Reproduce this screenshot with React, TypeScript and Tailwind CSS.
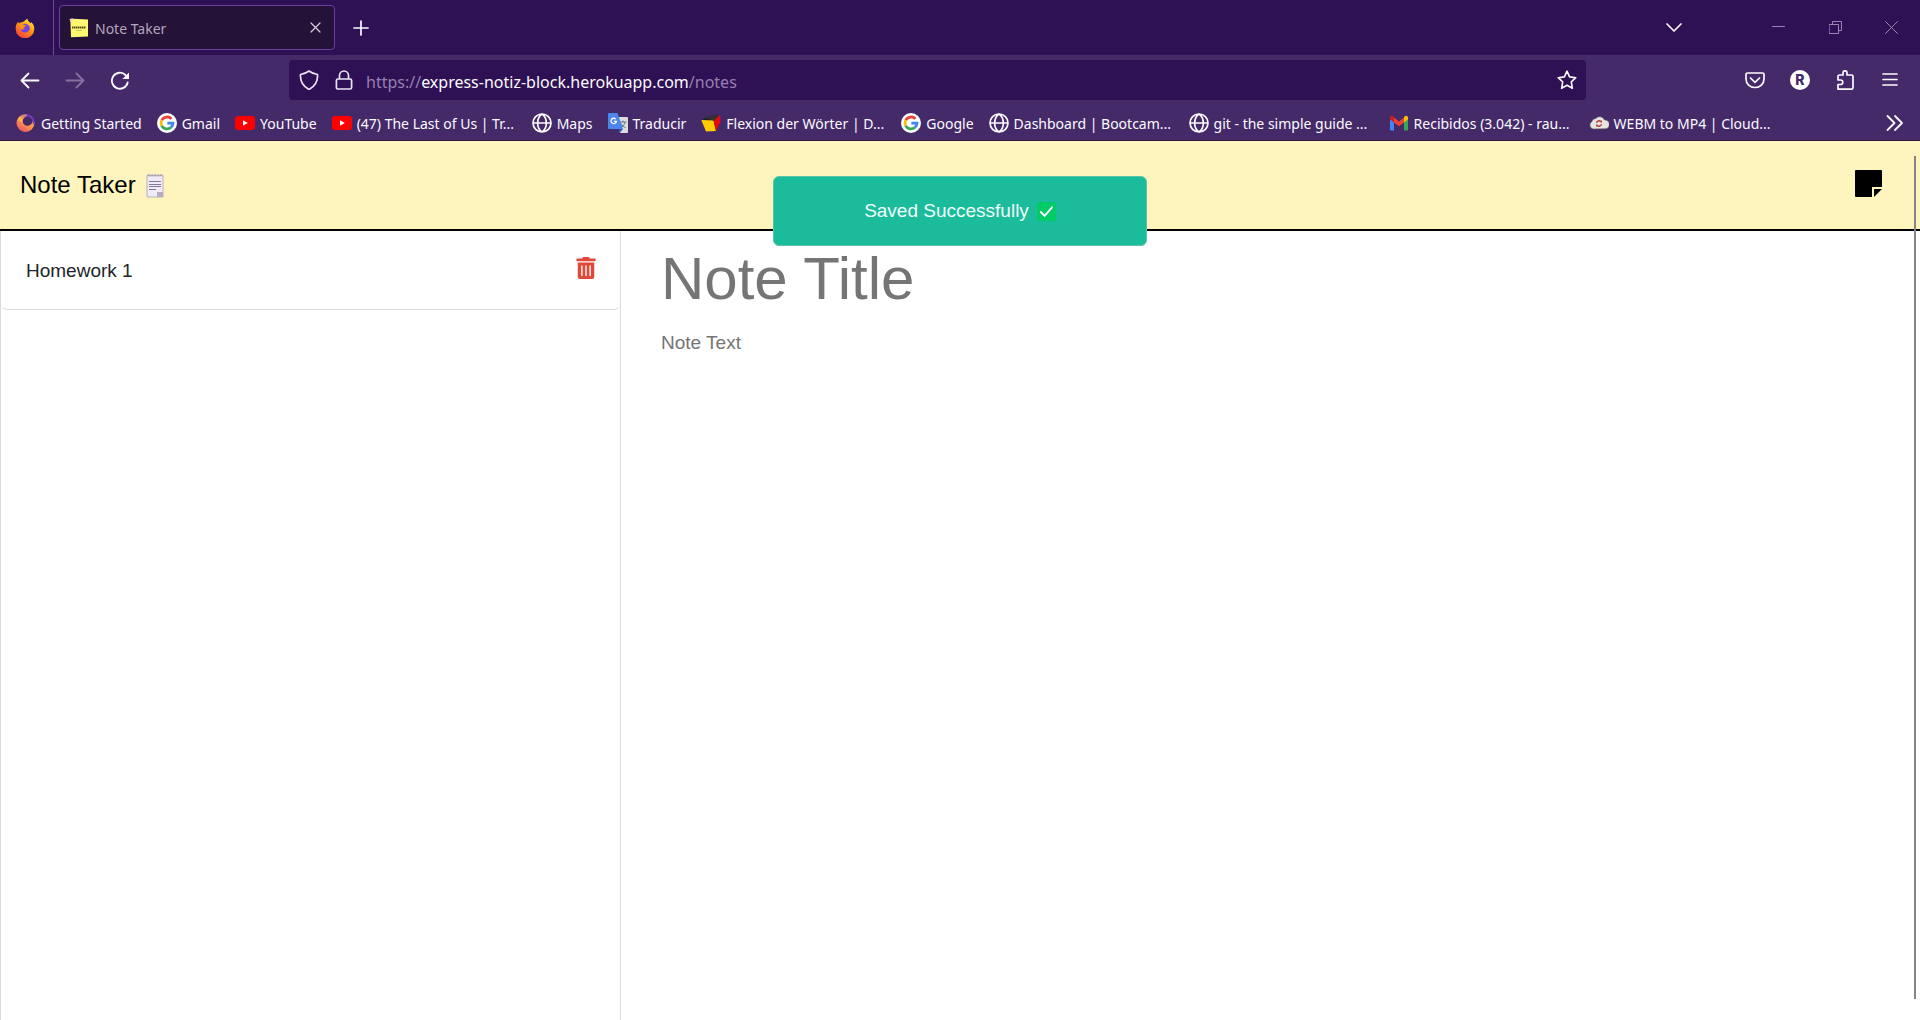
import type { ReactNode } from "react";

function Line({ d, size = 20, color = "#fbfbfe", w = 1.6, box = 20, label }: { d: string; size?: number; color?: string; w?: number; box?: number; label?: string }) {
  return (
    <svg aria-label={label} width={size} height={size} viewBox={`0 0 ${box} ${box}`} fill="none" stroke={color} strokeWidth={w} strokeLinecap="round" strokeLinejoin="round" className="shrink-0">
      <path d={d} />
    </svg>
  );
}

function FirefoxIcon({ soft = false }: { soft?: boolean }) {
  const id = soft ? "ffs" : "ff";
  return (
    <svg width="20" height="20" viewBox="0 0 20 20" className="shrink-0">
      <defs>
        <linearGradient id={id} x1="0.85" y1="0" x2="0.2" y2="1">
          <stop offset="0" stopColor={soft ? "#8a4fd0" : "#fff44f"} />
          <stop offset="0.45" stopColor={soft ? "#ffa04a" : "#ff980e"} />
          <stop offset="1" stopColor={soft ? "#e8506a" : "#ff3647"} />
        </linearGradient>
      </defs>
      {soft ? (
        <>
          <circle cx="9.500" cy="10" r="9" fill={`url(#${id})`} />
          <path d="M7 6.500C8 4.500 11 2.500 14 3.200 16.500 4.500 17 7 16.500 9 15.500 12 12.500 13.200 10 12.500 7.500 11.800 6 9 7 6.500Z" fill="#45296a" />
          <path d="M11 1c4 .5 7 3.500 8 8l-1.500 3c.3-4-1.500-7-6.500-9Z" fill="#6e3bbd" />
          <path d="M2 5c1.500-1 3-.5 5 1-1 1-1 2-.5 3L3 8Z" fill="#ffb14f" />
        </>
      ) : (
        <>
          <path d="M12.500.5c-.5 2 2 3 3 5l.5-1.500c2.500 2 3.400 4.500 3.300 7A9.300 9.300 0 0 1 .7 11C.5 8 1.500 5.500 3.300 3.500l.5 2C4.800 4.500 6 4 7 4.200 8.500 4.300 10 2 12.500.5Z" fill={`url(#${id})`} />
          <path d="M7 6.500c2-1.300 6-1 7.500 2 1 3.500-1.500 6-4.500 6-2.500 0-4.200-1.500-4.500-3.500 1.500 1 3 .8 4.500-.5-1.500-.5-3-.5-4-1.500-.3-1 .3-2 1-2.500Z" fill="#7542e5" />
          <path d="M4.500 5.500c1.500-.7 3 0 3.500 1 1 .3 2 .5 3 1-.5 1.500-2.500 1.500-3.200 2.700-.8.500-2 .3-2.800-.7Z" fill="#ff980e" />
        </>
      )}
    </svg>
  );
}

function GoogleIcon() {
  return (
    <svg width="20" height="20" viewBox="0 0 20 20" className="shrink-0">
      <circle cx="10" cy="10" r="10" fill="#fff" />
      <g fill="none" strokeWidth="2.8">
        <path d="M14.400 5.900A6 6 0 0 0 4.700 7.200" stroke="#ea4335" />
        <path d="M4.700 7.200a6 6 0 0 0 0 5.600" stroke="#fbbc05" />
        <path d="M4.700 12.800a6 6 0 0 0 9.200 1.700" stroke="#34a853" />
        <path d="M13.900 14.500a6 6 0 0 0 2.100-4.300H10.300" stroke="#4285f4" />
      </g>
    </svg>
  );
}

function YoutubeIcon() {
  return (
    <svg width="20" height="20" viewBox="0 0 20 20" className="shrink-0">
      <rect x="0" y="3" width="20" height="14" rx="3" fill="#f00" />
      <path d="M8 7.200 12.800 10 8 12.800Z" fill="#fff" />
    </svg>
  );
}

function GlobeIcon() {
  return <Line d="M1 10a9 9 0 1 0 18 0a9 9 0 1 0-18 0M1.300 10H18.700M10 1C4.200 5 4.200 15 10 19M10 1c5.800 4 5.800 14 0 18" w={1.7} />;
}

function TranslateIcon() {
  return (
    <svg width="20" height="20" viewBox="0 0 20 20" className="shrink-0">
      <path d="M8 4h11a1 1 0 0 1 1 1v14a1 1 0 0 1-1 1h-7Z" fill="#dcdcdc" />
      <path d="M12 9h6.500M15 7.500V9M17 9c-.5 3-2.500 4.500-4 5.500M13 10.500c1 2 3 3.500 4.500 4" stroke="#607988" strokeWidth="1" fill="none" />
      <path d="M1 0h8.500L15 16H1a1 1 0 0 1-1-1V1a1 1 0 0 1 1-1Z" fill="#4c86ec" />
      <path d="M10.500 16H15l-3.200 4Z" fill="#3158b0" />
      <path d="M7.800 6.200A2.700 2.700 0 1 0 8.400 8.300H5.900" stroke="#fff" strokeWidth="1.300" fill="none" />
    </svg>
  );
}

function FlexionIcon() {
  return (
    <svg width="20" height="20" viewBox="0 0 20 20" className="shrink-0">
      <path d="M4 5 17 1.500 14 7 .5 7Z" fill="#222" />
      <path d="M.3 7 12.500 7.500 15 18 5 18.500Z" fill="#fc0" />
      <path d="M12.500 7.500 19 2 19.500 9 15 18Z" fill="#e10a0a" />
      <path d="m4 5 13-3.500L12.500 7.500Z" fill="#333" />
    </svg>
  );
}

function GmailIcon() {
  return (
    <svg width="20" height="20" viewBox="0 0 20 20" className="shrink-0">
      <path d="M1 5v11.500a1 1 0 0 0 1 1h3V8Z" fill="#4285f4" />
      <path d="M19 5v11.500a1 1 0 0 1-1 1h-3V8Z" fill="#34a853" />
      <path d="M5 4.500 10 8.500 15 4.500V9.500L10 13.300 5 9.500Z" fill="#ea4335" />
      <path d="M1 5c0-2 2-2.800 3.500-1.500L5 4v5.500L1 6.500Z" fill="#c5221f" />
      <path d="M19 5c0-2-2-2.800-3.500-1.500L15 4v5.500l4-3Z" fill="#fbbc04" />
    </svg>
  );
}

function CloudIcon() {
  return (
    <svg width="20" height="20" viewBox="0 0 20 20" className="shrink-0">
      <path d="M4.500 16A4 4 0 0 1 3 8.500 4 4 0 0 1 6.800 5.500 5.200 5.200 0 0 1 15.500 7 4.300 4.300 0 0 1 16.500 15.800Z" fill="#e8e4e4" stroke="#555" strokeWidth=".6" />
      <path d="M7.500 10a2.600 2.600 0 0 1 4.300-1.500M12.500 11a2.600 2.600 0 0 1-4.300 1.500" stroke="#b5403a" strokeWidth="1.400" fill="none" />
      <path d="m12.800 7 .2 2.700-2.500-.7ZM7.200 14l-.2-2.700 2.500.7Z" fill="#b5403a" />
    </svg>
  );
}

function NotepadIcon() {
  return (
    <svg width="18" height="25" viewBox="0 0 18 25" className="shrink-0">
      <path d="M1 2.500h16V24H1Z" fill="#f1ebf6" stroke="#b9b0c2" />
      <path d="M2 3.500c0-3 2-3 2 0M5 3.500c0-3 2-3 2 0M8 3.500c0-3 2-3 2 0M11 3.500c0-3 2-3 2 0M14 3.500c0-3 2-3 2 0" stroke="#a79eb0" fill="none" strokeWidth=".9" />
      <path d="M3 8.500h12M3 11.500h12M3 13.500h12M3 16.500h7" stroke="#83769a" strokeWidth="1" />
      <path d="M11 24v-5h6v5Z" fill="#b8aec4" />
    </svg>
  );
}

function Bookmark({ icon, label, fixed = false }: { icon: ReactNode; label: string; fixed?: boolean }) {
  return (
    <a href="#" className={fixed ? "flex w-[200px] shrink-0 items-center gap-[5px]" : "flex shrink-0 items-center gap-[5px] pr-[15px]"}>
      {icon}
      <span className="pt-0.5 whitespace-nowrap">{label}</span>
    </a>
  );
}

export default function App() {
  return (
    <div className="relative flex min-h-screen flex-col bg-white font-['Liberation_Sans',sans-serif] text-[19px] text-[#212529]">
      <div className="bg-[#452a6a] font-['Noto_Sans',sans-serif] text-[14px] text-[#fbfbfe]">
        <div className="flex h-[55px] items-center bg-[#2e1054]">
          <div className="flex h-full w-[54px] items-center border-r border-[#6b4a95] pl-[15px]">
            <FirefoxIcon />
          </div>
          <div className="ml-[5px] flex h-[45px] w-[276px] items-center rounded border border-[#6c3f9d] bg-[#251238] pl-[9px] pr-[13px]">
            <svg width="20" height="20" viewBox="0 0 20 20" className="shrink-0">
              <path d="M.5 1 4 .8 19 1.500V18.500L2 19.200 1.500 4Z" fill="#fef871" />
              <path d="M1 1l3-.8V2L1.500 4Z" fill="#e9c9d8" />
              <path d="M3 9.500h14" stroke="#4c4520" strokeWidth="1.800" strokeDasharray="1.500 .5" />
              <path d="M7 12.500h6" stroke="#bdb24d" strokeWidth=".7" />
            </svg>
            <span className="ml-[6px] flex-1 pt-0.5 text-[#b3a6bf]">Note Taker</span>
            <button aria-label="Close tab"><Line d="M1 1l9 9M10 1l-9 9" size={11} box={11} w={1.2} color="#d8d0e0" /></button>
          </div>
          <button aria-label="New tab" className="ml-[18px]"><Line d="M8 1v14M1 8h14" size={16} box={16} w={1.7} /></button>
          <div className="ml-auto flex items-center pr-[22px]">
            <button aria-label="List all tabs" className="mr-[90px]"><Line d="M1 4l7 7 7-7" size={16} box={16} w={1.7} /></button>
            <button aria-label="Minimize" className="mr-[44px]"><Line d="M.5 5.500h12" size={13} box={13} w={1} color="#9a86b3" /></button>
            <button aria-label="Restore" className="mr-[43px]"><Line d="M.5 3.500h9v9h-9ZM3.500 3.500v-3h9v9h-3" size={13} box={13} w={1} color="#9a86b3" /></button>
            <button aria-label="Close window"><Line d="M.5.5l12 12M12.500.5l-12 12" size={13} box={13} w={1} color="#9a86b3" /></button>
          </div>
        </div>

        <div className="flex h-[50px] items-center">
          <div className="flex w-[289px] shrink-0 items-center gap-[25px] pl-5">
            <button aria-label="Back"><Line d="M1.500 10.500H18.500M8.500 3.500l-7 7 7 7" w={1.8} /></button>
            <button aria-label="Forward"><Line d="M1.500 10.500H18.500M11.500 3.500l7 7-7 7" w={1.8} color="#8570a1" /></button>
            <button aria-label="Reload">
              <svg width="20" height="20" viewBox="0 0 20 20" fill="none">
                <path d="M17.700 12.500A8 8 0 1 1 15.500 5" stroke="#fbfbfe" strokeWidth="1.800" strokeLinecap="round" />
                <path d="M19 2.500v6.500h-6.500Z" fill="#fbfbfe" />
              </svg>
            </button>
          </div>
          <div className="flex h-10 flex-1 items-center rounded bg-[#2e1054] pl-[10px] pr-[9px]">
            <Line d="M10 1C12 2.500 15 4 18.500 4.500 19 11 16.500 16 10 19.500 3.500 16 1 11 1.500 4.500 5 4 8 2.500 10 1Z" w={1.7} color="#ebe3f4" />
            <span className="ml-[15px]"><Line d="M4 9h12a1.600 1.600 0 0 1 1.600 1.600v6.800A1.600 1.600 0 0 1 16 19H4a1.600 1.600 0 0 1-1.600-1.600v-6.800A1.600 1.600 0 0 1 4 9M5.500 9V5.500a4.500 4.500 0 0 1 9 0V9" w={1.7} color="#ebe3f4" /></span>
            <div role="textbox" aria-label="Address" className="ml-3 flex-1 pt-1 text-[16px] text-[#9780b0]">
              https://<span className="text-[#fbfbfe]">express-notiz-block.herokuapp.com</span>/notes
            </div>
            <button aria-label="Bookmark this page"><Line d="M10 1.200l2.600 5.700 6.200.8-4.500 4.200 1.100 6.400L10 15.300l-5.400 3 1.100-6.400L1.200 7.700l6.200-.8Z" w={1.6} /></button>
          </div>
          <div className="flex w-[334px] shrink-0 items-center justify-end gap-[25px] pr-5">
            <button aria-label="Pocket"><Line d="M2.500 3h15a1.500 1.500 0 0 1 1.500 1.500V9a9 8.500 0 0 1-18 0V4.500A1.500 1.500 0 0 1 2.500 3M5.500 8l4.500 4.300L14.500 8" w={1.7} /></button>
            <button aria-label="Account" className="flex size-5 items-center justify-center rounded-full bg-white font-['Inter',sans-serif] text-[14px] leading-5 font-extrabold text-[#452a6a]">R</button>
            <button aria-label="Extensions"><Line d="M3 19.200V14.500H5.500a2 2 0 0 0 0-4.500H3V6.500A1.500 1.500 0 0 1 4.500 5H8V2.800a2 2 0 0 1 4 0V5h4.500A1.500 1.500 0 0 1 18 6.500v11a1.700 1.700 0 0 1-1.700 1.700Z" w={1.7} /></button>
            <button aria-label="Menu"><Line d="M3 4h14M3 9.500h14M3 15h14" w={1.7} /></button>
          </div>
        </div>

        <nav className="flex h-9 items-center border-b border-[#33123c] pl-4 pr-[15px]">
          <Bookmark icon={<FirefoxIcon soft />} label="Getting Started" />
          <Bookmark icon={<GoogleIcon />} label="Gmail" />
          <Bookmark icon={<YoutubeIcon />} label="YouTube" />
          <Bookmark icon={<YoutubeIcon />} label="(47) The Last of Us | Tr..." fixed />
          <Bookmark icon={<GlobeIcon />} label="Maps" />
          <Bookmark icon={<TranslateIcon />} label="Traducir" />
          <Bookmark icon={<FlexionIcon />} label="Flexion der Wörter | D..." fixed />
          <Bookmark icon={<GoogleIcon />} label="Google" />
          <Bookmark icon={<GlobeIcon />} label="Dashboard | Bootcam..." fixed />
          <Bookmark icon={<GlobeIcon />} label="git - the simple guide ..." fixed />
          <Bookmark icon={<GmailIcon />} label="Recibidos (3.042) - rau..." fixed />
          <Bookmark icon={<CloudIcon />} label="WEBM to MP4 | Cloud..." fixed />
          <button aria-label="More bookmarks" className="ml-auto"><Line d="M2.500 3l7 7-7 7M10 3l7 7-7 7" w={1.8} /></button>
        </nav>
      </div>

      <header className="flex h-[90px] items-center justify-between border-b-2 border-black bg-[#fef4bd] pl-5 pr-[38px]">
        <a href="#" className="flex items-center gap-[10px] text-2xl text-black">
          Note Taker <NotepadIcon />
        </a>
        <button aria-label="New note" className="pb-1">
          <svg width="27" height="27" viewBox="0 0 27 27">
            <path d="M1 0H26a1 1 0 0 1 1 1V17H17V27H1a1 1 0 0 1-1-1V1a1 1 0 0 1 1-1Z" />
            <path d="M19 19H27L19 27Z" />
          </svg>
        </button>
      </header>

      <main className="flex flex-1">
        <aside className="w-[621px] shrink-0 border-x border-[#dcdcdc]">
          <ul>
            <li className="flex h-[79px] items-start justify-between rounded-b-md border-b border-[#dcdcdc] pt-[26px] pl-[25px] pr-[24px]">
              <span className="leading-7">Homework 1</span>
              <button aria-label="Delete note">
                <svg width="20" height="22" viewBox="0 0 448 512" fill="#e0493a">
                  <path d="M32 464a48 48 0 0 0 48 48h288a48 48 0 0 0 48-48V128H32zm272-256a16 16 0 0 1 32 0v224a16 16 0 0 1-32 0zm-96 0a16 16 0 0 1 32 0v224a16 16 0 0 1-32 0zm-96 0a16 16 0 0 1 32 0v224a16 16 0 0 1-32 0zM432 32H312l-9.400-18.700A24 24 0 0 0 281.100 0H166.800a23.700 23.700 0 0 0-21.400 13.300L136 32H16A16 16 0 0 0 0 48v32a16 16 0 0 0 16 16h416a16 16 0 0 0 16-16V48a16 16 0 0 0-16-16z" />
                </svg>
              </button>
            </li>
          </ul>
        </aside>
        <section className="flex flex-1 flex-col pt-3 pl-10 pr-10">
          <input aria-label="Note title" placeholder="Note Title" className="h-[72px] w-full text-[60px] outline-none placeholder:text-[#757575]" />
          <textarea aria-label="Note text" placeholder="Note Text" className="mt-[14px] w-full flex-1 resize-none leading-7 outline-none placeholder:text-[#757575]" />
        </section>
      </main>

      <div role="status" className="absolute top-[176px] left-1/2 flex h-[70px] w-[374px] -translate-x-1/2 items-center justify-center gap-2 rounded-md border border-[#5cc5a8] bg-[#1abc9c] text-[#f2fffb]">
        Saved Successfully
        <svg width="19" height="19" viewBox="0 0 20 20">
          <rect width="20" height="20" rx="3" fill="#00cc66" />
          <path d="M4 10.500l4 4 8-9" stroke="#fff" strokeWidth="2" fill="none" strokeLinecap="round" />
        </svg>
      </div>
      <div className="absolute top-[156px] right-1 bottom-[21px] w-0.5 bg-[#858585]" />
    </div>
  );
}
